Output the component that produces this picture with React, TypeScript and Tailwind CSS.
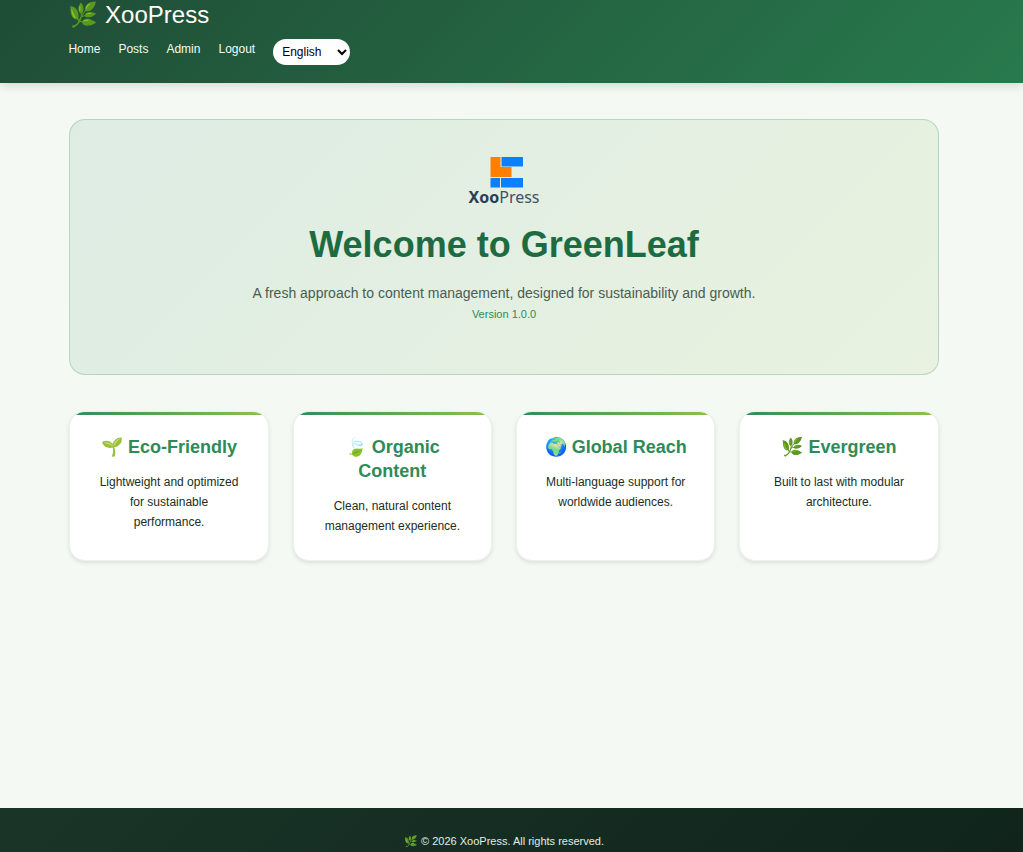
import React, { useState } from "react";

interface Feature {
  icon: string;
  title: string;
  description: string;
}

const navLinks = ["Home", "Posts", "Admin", "Logout"];

const features: Feature[] = [
  { icon: "🌱", title: "Eco-Friendly", description: "Lightweight and optimized for sustainable performance." },
  { icon: "🍃", title: "Organic Content", description: "Clean, natural content management experience." },
  { icon: "🌍", title: "Global Reach", description: "Multi-language support for worldwide audiences." },
  { icon: "🌿", title: "Evergreen", description: "Built to last with modular architecture." },
];

function Logo() {
  return (
    <div className="flex h-12 flex-col items-center">
      <svg width="40" height="32" viewBox="-6 0 40 32" className="shrink-0" aria-hidden="true">
        <path d="M.5 1h10v10h11v10H.5z" fill="#ff8000" />
        <path d="M11.500 1H33v9.500H11.500z" fill="#0a80ff" />
        <path d="M.5 22h9.500v9.500H.5z" fill="#0a80ff" />
        <path d="M11 22h22v9.500H11z" fill="#0a80ff" />
      </svg>
      <div className="font-['Noto_Sans',sans-serif] text-base leading-[18px] text-[#3d5168]">
        <span className="font-bold text-[#2c3e50]">Xoo</span>Press
      </div>
    </div>
  );
}

function Header() {
  const [language, setLanguage] = useState("en");

  return (
    <header className="bg-linear-135 from-[#1f4d36] to-[#287a4d] pr-[15px] pb-[18px] text-white shadow-[0_2px_10px_rgba(0,0,0,0.15)]">
      <div className="mx-auto w-9/10 px-[18px]">
        <a href="#" className="block text-2xl leading-[30px]">🌿 XooPress</a>
        <nav className="mt-[9px] flex items-start gap-[18px] text-xs">
          {navLinks.map((link) => (
            <a key={link} href="#" className="leading-5 text-[#f5faf5]">{link}</a>
          ))}
          <select
            aria-label="Language"
            value={language}
            onChange={(e) => setLanguage(e.target.value)}
            className="h-[26px] w-[77px] rounded-full bg-white px-[5px] text-xs text-black"
          >
            <option value="en">English</option>
            <option value="de">Deutsch</option>
            <option value="fr">Français</option>
          </select>
        </nav>
      </div>
    </header>
  );
}

function FeatureCard({ feature }: { feature: Feature }) {
  return (
    <div className="relative overflow-hidden rounded-2xl border border-[#2e8b57]/10 bg-white px-6 pt-[23px] pb-6 text-center shadow-[0_2px_4px_rgba(0,0,0,0.1)]">
      <div className="absolute inset-x-0 top-0 h-[3px] bg-linear-to-r from-[#2e8b57] to-[#8bc34a]" />
      <h3 className="text-lg leading-6 font-bold text-[#2e8b57]">
        {`${feature.icon} ${feature.title}`}
      </h3>
      <p className="mt-[13px] text-xs leading-5">{feature.description}</p>
    </div>
  );
}

function App() {
  return (
    <div className="flex min-h-screen flex-col bg-[#f4f9f4] font-['Liberation_Sans',sans-serif] text-[#1a2e23]">
      <Header />

      <main className="flex-1 pt-9 pr-[15px]">
        <div className="mx-auto w-9/10 px-[19px]">
          <section className="rounded-2xl border border-[#2e8b57]/25 bg-linear-135 from-[#deece4] to-[#e8f2df] px-9 pt-9 pb-[51px] text-center">
            <Logo />
            <h1 className="mt-[17px] text-4xl leading-12 font-bold text-[#1e6b42]">Welcome to GreenLeaf</h1>
            <p className="mt-3 text-sm leading-6 text-[#4a5d52]">
              A fresh approach to content management, designed for sustainability and growth.
            </p>
            <p className="text-[11px] leading-[18px] text-[#2e8b57]">Version 1.0.0</p>
          </section>

          <section className="my-9 grid grid-cols-1 gap-6 sm:grid-cols-2 md:grid-cols-4">
            {features.map((feature) => (
              <FeatureCard key={feature.title} feature={feature} />
            ))}
          </section>
        </div>
      </main>

      <footer className="bg-linear-135 from-[#1a3528] to-[#10241b] pt-6 pr-[15px] pb-0.5 text-center text-[11px] leading-[18px] text-[#e0ede4]">
        🌿 © 2026 XooPress. All rights reserved.
      </footer>
    </div>
  );
}

export default App;
